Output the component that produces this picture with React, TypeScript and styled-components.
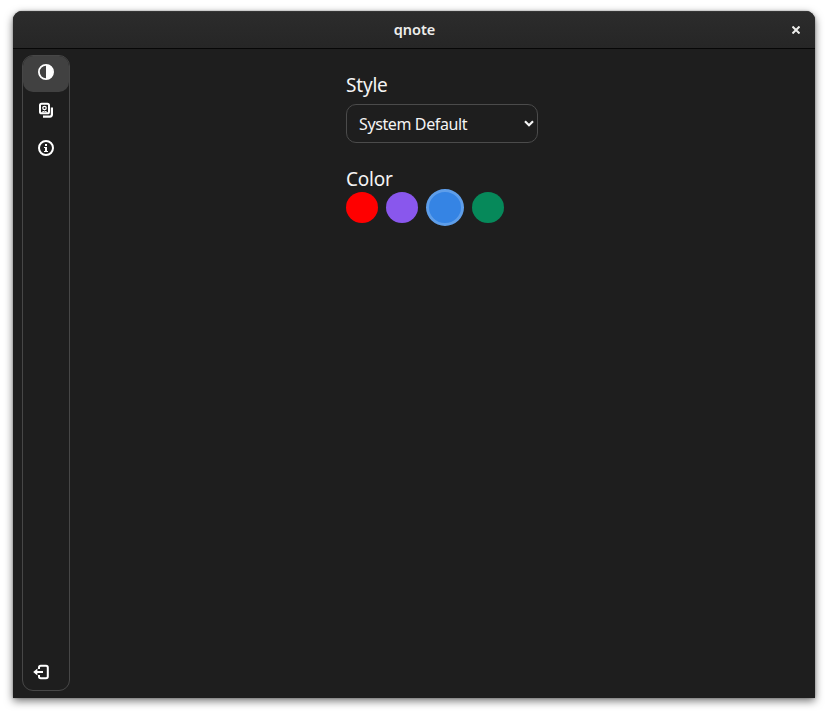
import React from "react";
import styled, { createGlobalStyle } from "styled-components";

const GlobalStyle = createGlobalStyle`
  * { box-sizing: border-box; }
  body {
    margin: 0;
    background: #fff;
    font-family: "Noto Sans", sans-serif;
    overflow: hidden;
  }
`;

const Desktop = styled.main`
  width: 828px;
  height: 714px;
  padding: 11px 13px 16px;
`;

const Window = styled.div`
  display: flex;
  flex-direction: column;
  width: 802px;
  height: 687px;
  overflow: hidden;
  border-radius: 9px 9px 0 0;
  background: #1e1e1e;
  box-shadow: 0 3px 8px rgba(0, 0, 0, 0.55), 0 0 2px rgba(0, 0, 0, 0.35);
`;

const TitleBar = styled.header`
  display: grid;
  grid-template-columns: 38px 1fr 38px;
  align-items: center;
  flex: none;
  height: 38px;
  border-bottom: 1px solid #070707;
  background: linear-gradient(#2c2c2c, #262626);
  box-shadow: inset 0 1px #363636;
`;

const Title = styled.h1`
  grid-column: 2;
  margin: 0;
  padding: 0 0 2px 1px;
  text-align: center;
  color: #eeeeec;
  font-size: 14.5px;
  font-weight: 600;
  line-height: 20px;
`;

const CloseButton = styled.button`
  display: grid;
  place-items: center;
  height: 37px;
  padding: 0;
  border: 0;
  background: none;
  color: #eeeeec;
`;

const Body = styled.div`
  display: flex;
  flex: 1;
  padding: 6px 9px 8px;
`;

const Sidebar = styled.nav`
  display: flex;
  flex-direction: column;
  gap: 2px;
  width: 48px;
  height: 635.5px;
  border: 1px solid #474747;
  border-radius: 11px;
`;

const NavButton = styled.button<{ $active?: boolean }>`
  display: grid;
  place-items: center;
  flex: none;
  width: 46px;
  height: 36px;
  padding: 0 0 4px;
  border: 0;
  border-radius: 10px;
  background: ${({ $active }) => ($active ? "#414141" : "transparent")};
  color: #fff;
`;

const ExitButton = styled(NavButton)`
  margin-top: auto;
  padding: 0 10px 0 0;
`;

const Settings = styled.section`
  display: flex;
  flex-direction: column;
  gap: 23px;
  width: 192px;
  margin: 17px 0 0 276px;
`;

const Group = styled.div<{ $gap: number }>`
  display: flex;
  flex-direction: column;
  gap: ${({ $gap }) => $gap}px;
`;

const Label = styled.h2<{ $tracking: number }>`
  margin: 0;
  color: #f4f4f4;
  font-size: 19px;
  font-weight: 400;
  line-height: 26px;
  letter-spacing: ${({ $tracking }) => $tracking}px;
`;

const SelectBox = styled.button`
  display: flex;
  align-items: center;
  justify-content: space-between;
  width: 192px;
  height: 39px;
  padding: 0 3px 0 12px;
  border: 1px solid #4b4b4b;
  border-radius: 10px;
  background: transparent;
  color: #f4f4f4;
  font: 400 16px/24px "Noto Sans", sans-serif;
  letter-spacing: -0.38px;
`;

const Swatches = styled.div`
  display: flex;
  align-items: center;
  gap: 8px;
  height: 37px;
  margin-top: -3px;
`;

const Swatch = styled.button<{ $color: string; $ring?: string }>`
  flex: none;
  box-sizing: content-box;
  width: 32px;
  height: 31px;
  padding: 0;
  border: ${({ $ring }) => ($ring ? `3px solid ${$ring}` : "0")};
  border-radius: 50%;
  background: ${({ $color }) => $color};
`;

const CloseIcon = () => (
  <svg width="8" height="8" viewBox="0 0 8 8" stroke="currentColor" strokeWidth="2">
    <path d="M.5.5l7 7M7.5.5l-7 7" />
  </svg>
);

const ContrastIcon = () => (
  <svg width="16" height="16" viewBox="0 0 16 16">
    <circle cx="8" cy="8" r="7.1" fill="none" stroke="currentColor" strokeWidth="1.8" />
    <path d="M8 1a7 7 0 0 1 0 14z" fill="currentColor" />
  </svg>
);

const LayersIcon = () => (
  <svg width="16" height="16" viewBox="0 0 16 16" fill="none" stroke="currentColor">
    <rect x="2" y="1.7" width="9" height="9.6" rx="1.6" strokeWidth="2" />
    <circle cx="6.5" cy="6" r="1.7" strokeWidth="1.3" />
    <path d="M3.8 10.2q2.7-2 5.4 0" strokeWidth="1" />
    <path d="M13.9 5.4v7.2a2 2 0 0 1-2 2H5" strokeWidth="2.2" />
  </svg>
);

const InfoIcon = () => (
  <svg width="16" height="16" viewBox="0 0 16 16">
    <circle cx="8" cy="8" r="7" fill="none" stroke="currentColor" strokeWidth="2" />
    <path d="M7 4h2v2H7zM6 7h3v4h1v1H6v-1h1V8H6z" fill="currentColor" />
  </svg>
);

const ExitIcon = () => (
  <svg width="16" height="16" viewBox="0 0 16 16" fill="none" stroke="currentColor" strokeWidth="2">
    <path d="M6 5V3.5A1.8 1.8 0 0 1 7.8 1.7H13A1.8 1.8 0 0 1 14.8 3.5v9A1.8 1.8 0 0 1 13 14.3H7.8A1.8 1.8 0 0 1 6 12.5V11" />
    <path d="M2 8h8" />
    <path d="M.2 8l4.2-3.6v7.2z" fill="currentColor" stroke="none" />
  </svg>
);

const ChevronIcon = () => (
  <svg width="10" height="8" viewBox="0 0 10 8" fill="none" stroke="currentColor" strokeWidth="2.2">
    <path d="M1 1.3l4 4 4-4" />
  </svg>
);

const colors = [
  { name: "Red", color: "#ff0000" },
  { name: "Purple", color: "#8957ed" },
  { name: "Blue", color: "#3584e4", ring: "#5e9eea" },
  { name: "Green", color: "#06895a" },
];

export default function App() {
  return (
    <>
      <GlobalStyle />
      <Desktop>
        <Window>
          <TitleBar>
            <Title>qnote</Title>
            <CloseButton aria-label="Close"><CloseIcon /></CloseButton>
          </TitleBar>
          <Body>
            <Sidebar>
              <NavButton $active aria-label="Appearance"><ContrastIcon /></NavButton>
              <NavButton aria-label="Notebooks"><LayersIcon /></NavButton>
              <NavButton aria-label="About"><InfoIcon /></NavButton>
              <ExitButton aria-label="Exit"><ExitIcon /></ExitButton>
            </Sidebar>
            <Settings>
              <Group $gap={6}>
                <Label $tracking={-0.2}>Style</Label>
                <SelectBox>System Default<ChevronIcon /></SelectBox>
              </Group>
              <Group $gap={0}>
                <Label $tracking={-0.25}>Color</Label>
                <Swatches>
                  {colors.map((c) => (
                    <Swatch key={c.name} aria-label={c.name} $color={c.color} $ring={c.ring} />
                  ))}
                </Swatches>
              </Group>
            </Settings>
          </Body>
        </Window>
      </Desktop>
    </>
  );
}
